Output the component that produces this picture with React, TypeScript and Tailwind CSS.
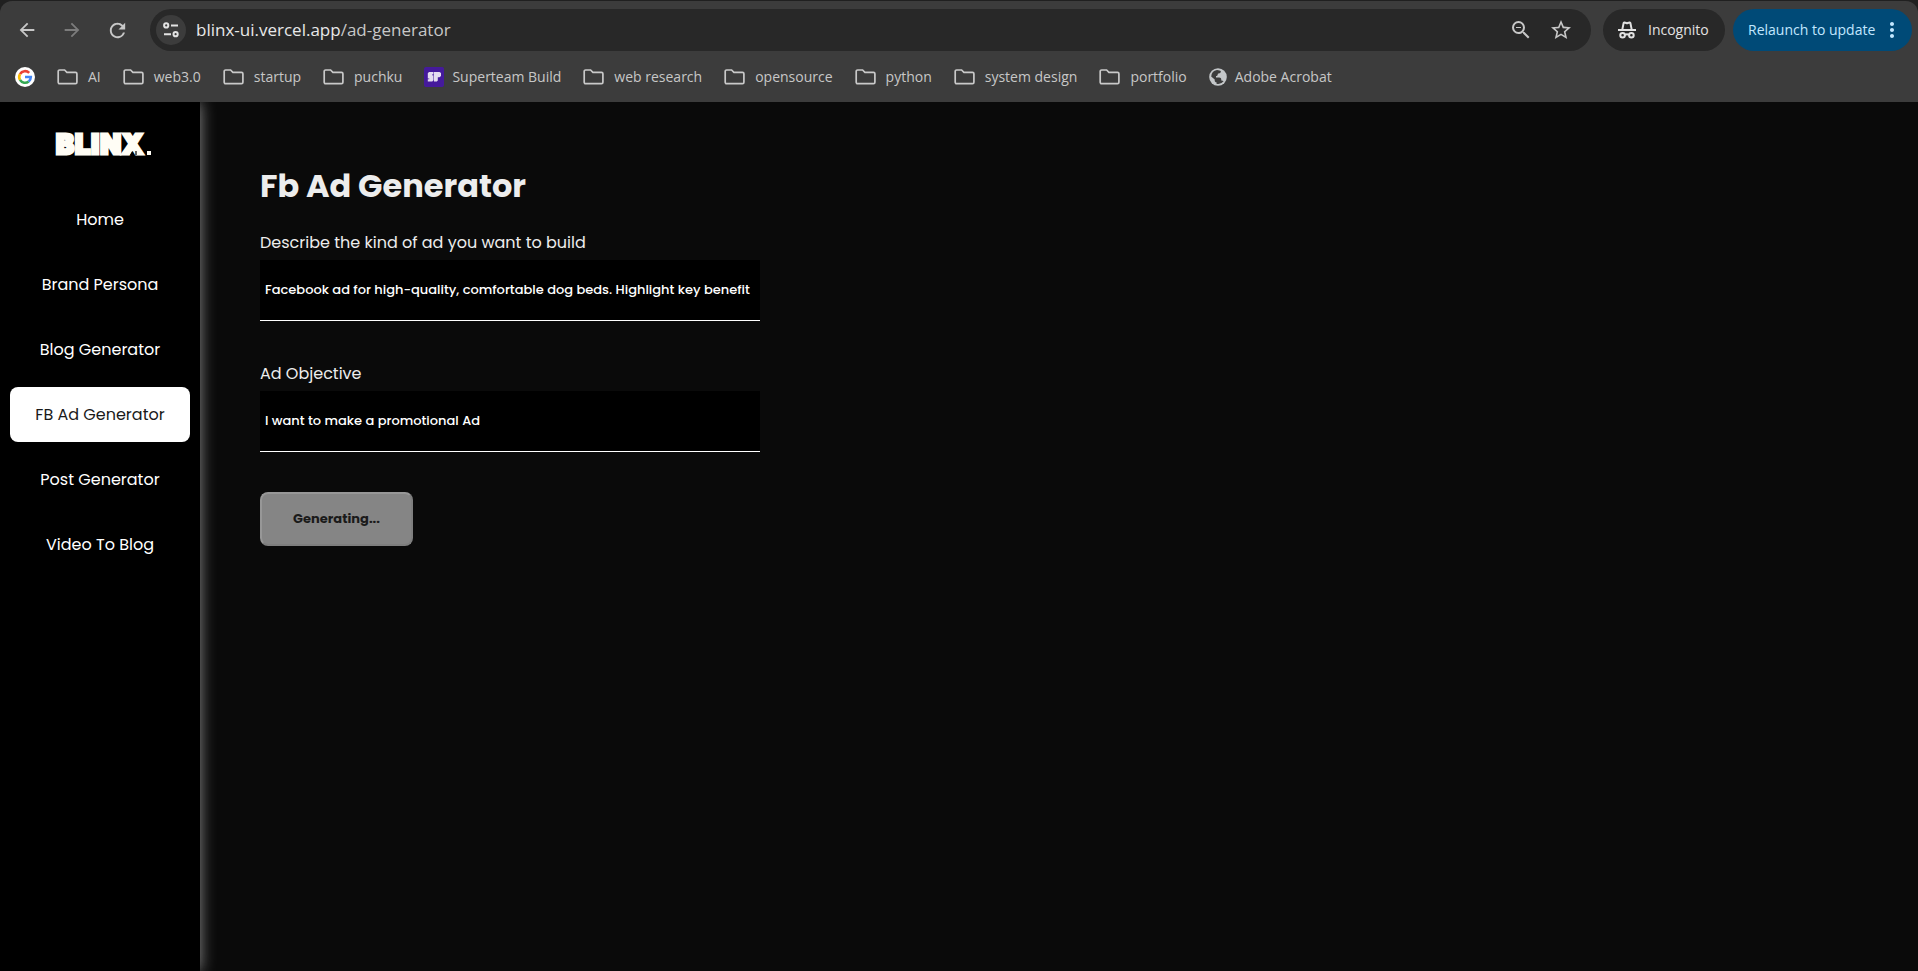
import { useState, type ReactNode } from "react";
import { MdArrowBack, MdArrowForward, MdRefresh, MdStarBorder, MdZoomOut, MdMoreVert } from "react-icons/md";

function TuneIcon() {
  return (
    <svg width="16" height="16" viewBox="0 0 16 16" fill="none" stroke="currentColor" strokeWidth="2" aria-hidden="true">
      <circle cx="3.2" cy="3.4" r="2.1" />
      <path d="M8 3.4h7M1 12.2h7" />
      <circle cx="12.6" cy="12.2" r="2.1" />
    </svg>
  );
}

function FolderIcon() {
  return (
    <svg width="21" height="16" viewBox="0 0 21 16" fill="none" stroke="#c9c9c9" strokeWidth="1.7" aria-hidden="true">
      <path d="M2.6 1h5l2.3 2.3h8.6a1.4 1.4 0 0 1 1.4 1.4v8.6a1.4 1.4 0 0 1-1.4 1.4H2.6a1.4 1.4 0 0 1-1.4-1.4V2.4A1.4 1.4 0 0 1 2.6 1z" />
    </svg>
  );
}

function IncognitoIcon() {
  return (
    <svg width="18" height="18" viewBox="0 0 18 18" fill="none" stroke="currentColor" strokeWidth="2" aria-hidden="true">
      <path d="M4.3 8.6 5.6 2.1c.1-.5.6-.8 1.1-.6l1.5.5c.5.2 1.1.2 1.6 0l1.5-.5c.5-.2 1 .1 1.1.6l1.3 6.5" />
      <path d="M0 9h18" />
      <circle cx="4.6" cy="14.2" r="2.3" />
      <circle cx="13.4" cy="14.2" r="2.3" />
      <path d="M6.9 13.8c1.3-.8 2.9-.8 4.2 0" />
    </svg>
  );
}

function GoogleIcon() {
  return (
    <svg width="20" height="20" viewBox="0 0 20 20" fill="none" strokeWidth="2.6" aria-hidden="true">
      <circle cx="10" cy="10" r="10" fill="#fff" />
      <path d="M14.2 5.9A5.8 5.8 0 0 0 5 7.1" stroke="#ea4335" />
      <path d="M5 7.1a5.8 5.8 0 0 0 0 5.8" stroke="#fbbc05" />
      <path d="M5 12.9a5.8 5.8 0 0 0 8.7 1.5" stroke="#34a853" />
      <path d="M13.7 14.4A5.8 5.8 0 0 0 15.8 10H10" stroke="#4285f4" />
    </svg>
  );
}

function SuperteamIcon() {
  return (
    <svg width="20" height="20" viewBox="0 0 20 20" aria-hidden="true">
      <rect width="20" height="20" rx="2" fill="#451a9c" />
      <path
        fill="#e4ddf0"
        d="M5 5h4.5v2.5H8v.8h1.5v5L8.3 14.5H3.8v-2.3h1.5v-.8H3.8V6.2zM10 5h5.5l1.5 1v3l-1.5 1.2h-1.700v3.300l-1 1H10z"
      />
    </svg>
  );
}

function GlobeIcon() {
  return (
    <svg width="18" height="18" viewBox="0 0 18 18" aria-hidden="true">
      <circle cx="9" cy="9" r="8.8" fill="#c4c7c9" />
      <path
        fill="#3c3c3c"
        d="M8 2.1c2 .1 3.3.6 3.9 1.2-.2 1.4-1 2.2-2.2 2.2-.8 0-1 .5-1 1.3-.1.9-.8 1.2-1.7 1.3v1.4h3.1c1.5 0 2.2.9 2.2 2.2v.9c1.1 0 1.9.3 2.3.7a7.1 7.1 0 0 1-7.1 2.5v-1.5c-1.1 0-1.8-.8-1.8-1.8v-.9L2.2 8.5A7 7 0 0 1 8 2.1z"
      />
    </svg>
  );
}

type Bookmark = { label: string; icon?: ReactNode };

const bookmarks: Bookmark[] = [
  { label: "AI" },
  { label: "web3.0" },
  { label: "startup" },
  { label: "puchku" },
  { label: "Superteam Build", icon: <SuperteamIcon /> },
  { label: "web research" },
  { label: "opensource" },
  { label: "python" },
  { label: "system design" },
  { label: "portfolio" },
  { label: "Adobe Acrobat", icon: <GlobeIcon /> },
];

const navItems = ["Home", "Brand Persona", "Blog Generator", "FB Ad Generator", "Post Generator", "Video To Blog"];

function BrowserBar() {
  return (
    <header className="relative z-10 bg-[#202020] pt-px font-['Open_Sans','Noto_Sans',sans-serif] text-sm text-[#c7c7c7]">
      <div className="rounded-t-xl bg-[#3c3c3c]">
        <div className="flex h-[58px] items-center pr-1.5 pl-[15px]">
          <button aria-label="Back" className="flex w-6 justify-center"><MdArrowBack size={22} /></button>
          <button aria-label="Forward" className="ml-[21px] flex w-6 justify-center text-[#7c7c7c]"><MdArrowForward size={22} /></button>
          <button aria-label="Reload" className="ml-[21px] flex w-6 justify-center"><MdRefresh size={23} /></button>
          <div className="ml-[21px] flex h-[42px] flex-1 items-center rounded-full bg-[#282828] pr-[18px] pl-1.5">
            <button aria-label="Site information" className="flex size-[30px] items-center justify-center rounded-full bg-[#3c3c3c] text-[#e3e3e3]">
              <TuneIcon />
            </button>
            <p className="ml-2.5 flex-1 text-[17px]">
              <span className="text-[#e8e8e8]">blinx-ui.vercel.app</span>/ad-generator
            </p>
            <button aria-label="Zoom"><MdZoomOut size={24} /></button>
            <button aria-label="Bookmark this page" className="ml-4"><MdStarBorder size={24} /></button>
          </div>
          <button className="ml-3 flex h-[42px] w-[122px] items-center gap-3 rounded-full bg-[#282828] pl-[15px] text-[#e3e3e3]">
            <IncognitoIcon />
            Incognito
          </button>
          <button className="ml-2 flex h-[42px] w-[179px] items-center justify-between rounded-full bg-[#004a77] pr-2 pl-[15px] whitespace-nowrap text-[#c2e7ff]">
            Relaunch to update
            <MdMoreVert size={24} />
          </button>
        </div>
        <nav aria-label="Bookmarks" className="flex h-[43px] items-center gap-[22px] pb-2 pl-[15px]">
          <a href="#google" aria-label="Google"><GoogleIcon /></a>
          {bookmarks.map(({ label, icon }) => (
            <a key={label} href="#bookmark" className={`flex items-center whitespace-nowrap ${icon ? "gap-2" : "gap-2.5"}`}>
              {icon ?? <FolderIcon />}
              {label}
            </a>
          ))}
        </nav>
      </div>
    </header>
  );
}

function Logo() {
  return (
    <a href="#home" className="ml-14 flex items-end gap-1 text-[#fffdf5]">
      <span className="relative flex gap-px font-['Inter',sans-serif] text-[27px] leading-[21px] font-black [-webkit-text-stroke:3px_#fffdf5]">
        {["B", "L", "I", "N", "X"].map((letter) => (
          <span key={letter}>{letter}</span>
        ))}
        <svg className="absolute right-1.5 bottom-0" width="7" height="4" viewBox="0 0 7 4" aria-hidden="true">
          <path d="M0 4 2.2 0 4.4 4zM5.4 0h1.2v4H5.4z" fill="#000" />
        </svg>
      </span>
      <span className="size-1 bg-[#fffdf5]" />
    </a>
  );
}

function Field({ id, label, initial }: { id: string; label: string; initial: string }) {
  const [value, setValue] = useState(initial);
  return (
    <div className="flex w-[500px] max-w-full flex-col">
      <label htmlFor={id} className="pb-1 text-base leading-[26px]">{label}</label>
      <input
        id={id}
        value={value}
        onChange={(e) => setValue(e.target.value)}
        className="h-[61px] border-b border-white bg-black px-[5px] text-[13px] font-medium text-white outline-none"
      />
    </div>
  );
}

export default function App() {
  return (
    <div className="flex min-h-screen flex-col bg-[#0a0a0a] text-[#ededed]">
      <BrowserBar />
      <div className="flex flex-1 font-['Poppins','Inter',sans-serif]">
        <aside className="flex w-[200px] shrink-0 flex-col bg-black px-2.5 pt-8 text-white shadow-[0_0_15px_#8c8c8c]">
          <div className="-mx-2.5 flex h-[58px] items-start">
            <Logo />
          </div>
          <nav aria-label="Main" className="flex flex-col gap-2.5">
            {navItems.map((item) => (
              <a
                key={item}
                href="#page"
                aria-current={item === "FB Ad Generator" ? "page" : undefined}
                className="flex h-[55px] items-center justify-center rounded-lg aria-[current=page]:bg-white aria-[current=page]:text-[#1a1a1a]"
              >
                {item}
              </a>
            ))}
          </nav>
        </aside>
        <main className="flex-1 px-[60px] pt-[60px]">
          <h1 className="text-[32px] leading-[48px] font-bold">Fb Ad Generator</h1>
          <form className="mt-5 flex flex-col items-start" onSubmit={(e) => e.preventDefault()}>
            <div className="flex flex-col gap-10">
              <Field
                id="description"
                label="Describe the kind of ad you want to build"
                initial="Facebook ad for high-quality, comfortable dog beds. Highlight key benefit"
              />
              <Field id="objective" label="Ad Objective" initial="I want to make a promotional Ad" />
            </div>
            <button
              type="submit"
              disabled
              className="mt-10 h-[54px] w-[153px] rounded-lg border-2 border-t-[#979797] border-r-[#7e7e7e] border-b-[#7e7e7e] border-l-[#979797] bg-[#858585] text-[13px] font-bold text-[#1a1a1a]"
            >
              Generating...
            </button>
          </form>
        </main>
      </div>
    </div>
  );
}
